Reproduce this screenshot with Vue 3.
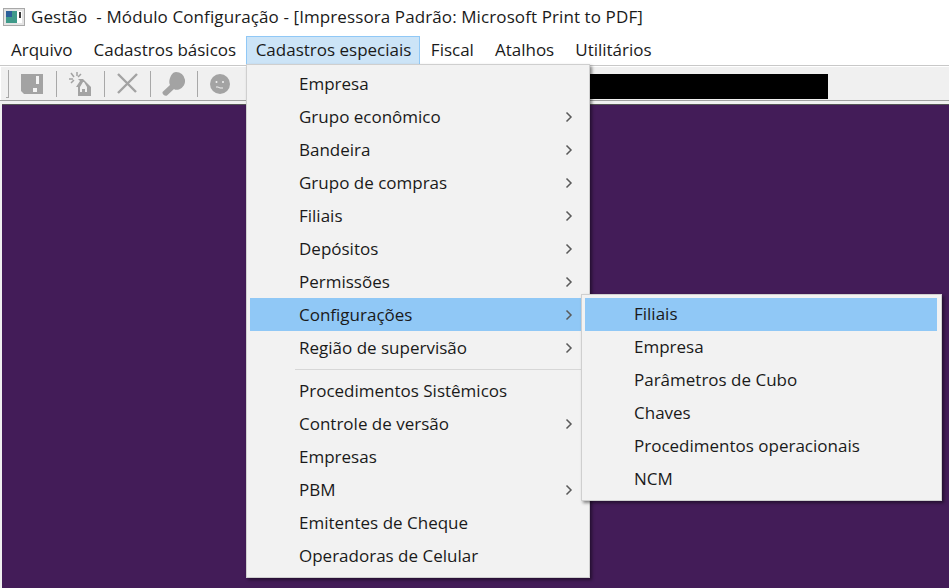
<script setup>
const top = ['Arquivo', 'Cadastros básicos', 'Cadastros especiais', 'Fiscal', 'Atalhos', 'Utilitários']
const groupA = [
  { t: 'Empresa' }, { t: 'Grupo econômico', s: 1 }, { t: 'Bandeira', s: 1 }, { t: 'Grupo de compras', s: 1 },
  { t: 'Filiais', s: 1 }, { t: 'Depósitos', s: 1 }, { t: 'Permissões', s: 1 }, { t: 'Configurações', s: 1, on: 1 },
  { t: 'Região de supervisão', s: 1 }
]
const groupB = [
  { t: 'Procedimentos Sistêmicos' }, { t: 'Controle de versão', s: 1 }, { t: 'Empresas' }, { t: 'PBM', s: 1 },
  { t: 'Emitentes de Cheque' }, { t: 'Operadoras de Celular' }
]
const sub = ['Filiais', 'Empresa', 'Parâmetros de Cubo', 'Chaves', 'Procedimentos operacionais', 'NCM']
</script>

<template>
  <div class="win">
    <header class="title">
      <svg class="appicon" width="22" height="18" viewBox="0 0 22 18">
        <rect x="0.500" y="0.500" width="21" height="17" fill="#e4e4e4" stroke="#a8a8a8" />
        <rect x="3" y="3" width="11" height="12" fill="#3f9a8a" />
        <rect x="3" y="3" width="6" height="6" fill="#2b5f9a" />
        <rect x="14" y="3" width="5" height="12" fill="#fff" />
        <rect x="16" y="4" width="2" height="6" fill="#3a3a3a" />
      </svg>
      <span>Gestão&nbsp; - Módulo Configuração - [Impressora Padrão: Microsoft Print to PDF]</span>
    </header>
    <nav class="menubar">
      <span v-for="(m, i) in top" :key="m" class="mi" :class="{ act: i === 2 }">{{ m }}</span>
    </nav>
    <div class="toolbar">
      <i class="grip"></i>
      <svg class="ic" width="23" height="22" viewBox="0 0 23 22"><path fill="#a3a3a3" d="M0 1h22v20H3l-3-3z" /><rect x="15" y="3" width="3" height="8" fill="#f4f4f4" /><rect x="12" y="15" width="4" height="4" fill="#f4f4f4" /></svg>
      <i class="sep"></i>
      <svg class="ic" width="23" height="24" viewBox="0 0 23 24"><path fill="#a3a3a3" d="M9 7h5l8 8v9H9v-9H7l4-6z" /><path fill="#f0f0f0" d="M11 15l3-5h1l3 5v5h-2v-3h-3v3h-2z" /><path stroke="#a3a3a3" stroke-width="1.500" fill="none" d="M2 1l3 4M8 0v4M0 7l4 0M2 11l3-3M12 2l-3 3" /></svg>
      <i class="sep"></i>
      <svg class="ic x" width="21" height="21" viewBox="0 0 21 21"><path stroke="#a3a3a3" stroke-width="2.400" fill="none" d="M1 1l18 18M20 1L1 20" /></svg>
      <i class="sep"></i>
      <svg class="ic key" width="24" height="24" viewBox="0 0 24 24"><path fill="#a3a3a3" d="M15 0a9 9 0 0 1 3 17.500c-2 .5-4 .5-5-.5l-7 6.500c-2 1-5-1-4.500-3.500L9 13c-1-2-1-4 0-7 1-3 3-6 6-6z" /></svg>
      <i class="sep"></i>
      <svg class="ic" width="20" height="20" viewBox="0 0 20 20"><circle cx="10" cy="10" r="10" fill="#a3a3a3" /><circle cx="6.500" cy="8" r="1" fill="#f0f0f0" /><circle cx="13" cy="8" r="1" fill="#f0f0f0" /><path stroke="#f0f0f0" fill="none" d="M6 13h2l2 1h3" /></svg>
    </div>
    <div class="redact"></div>
    <main class="desk"></main>

    <div class="menu main">
      <div v-for="r in groupA" :key="r.t" class="row" :class="{ on: r.on }">
        <span>{{ r.t }}</span>
        <svg v-if="r.s" width="8" height="12" viewBox="0 0 8 12"><path d="M1.500 1.500L6 6l-4.500 4.500" fill="none" stroke="#5a5a5a" stroke-width="1.500" /></svg>
      </div>
      <div class="rule"></div>
      <div v-for="r in groupB" :key="r.t" class="row">
        <span>{{ r.t }}</span>
        <svg v-if="r.s" width="8" height="12" viewBox="0 0 8 12"><path d="M1.500 1.500L6 6l-4.500 4.500" fill="none" stroke="#5a5a5a" stroke-width="1.500" /></svg>
      </div>
    </div>

    <div class="menu subm">
      <div v-for="(s, i) in sub" :key="s" class="row" :class="{ on: i === 0 }"><span>{{ s }}</span></div>
    </div>
  </div>
</template>

<style scoped>
.win {
  position: relative;
  width: 949px;
  height: 588px;
  overflow: hidden;
  display: flex;
  flex-direction: column;
  background: #fff;
  font-family: "Open Sans", "Noto Sans", sans-serif;
  font-size: 17px;
  color: #1a1a1a;
}
.title {
  height: 36px;
  flex: none;
  display: flex;
  align-items: center;
  gap: 6px;
  padding: 0 0 3px 3px;
  box-sizing: border-box;
  letter-spacing: 0.1px;
}
.menubar {
  height: 29px;
  flex: none;
  display: flex;
  padding-left: 0.500px;
  border-bottom: 1px solid #c8c8c8;
}
.mi {
  padding: 0 10.500px;
  line-height: 27px;
  box-sizing: border-box;
  height: 28px;
  white-space: nowrap;
}
.mi.act {
  background: #cce4f7;
  border: 1px solid #90c8f6;
  border-bottom: 0;
  margin-left: -1px;
  padding: 0 8px 0 9px;
  line-height: 26px;
}
.toolbar {
  height: 35px;
  flex: none;
  box-sizing: border-box;
  background: #f0f0f0;
  border-top: 1px solid #fff;
  border-bottom: 1px solid #a0a0a0;
  box-shadow: inset 1px 0 #fff;
  display: flex;
  align-items: center;
  padding-left: 6px;
  gap: 12px;
}
.grip {
  width: 2px;
  height: 27px;
  border-right: 1px solid #a8a8a8;
  border-bottom: 1px solid #a8a8a8;
}
.sep {
  width: 1px;
  height: 26px;
  background: #a8a8a8;
}
.key {
  margin-left: -2px;
}
.redact {
  position: absolute;
  left: 589px;
  top: 74px;
  width: 239px;
  height: 25px;
  background: #000;
}
.desk {
  flex: 1;
  background: #431c58;
  border-top: 3px solid #f0f0f0;
  border-left: 2px solid #f0f0f0;
  box-shadow: inset 0 1px #555;
}
.menu {
  position: absolute;
  box-sizing: border-box;
  background: #f2f2f2;
  border: 1px solid #cfcfcf;
  padding: 3px;
  box-shadow: 2px 2px 3px rgba(0, 0, 0, 0.45);
}
.main {
  left: 246px;
  top: 64px;
  width: 344px;
  height: 514px;
  padding-top: 2px;
}
.subm {
  left: 581px;
  top: 294px;
  width: 361px;
  height: 207px;
  padding-right: 4px;
}
.row {
  height: 33px;
  display: flex;
  align-items: center;
  justify-content: space-between;
  padding: 0 13px 1px 49px;
  box-sizing: border-box;
  white-space: nowrap;
}
.row svg {
  margin-top: 1px;
}
.subm .row {
  padding-bottom: 2px;
}
.row.on {
  background: #90c8f6;
}
.rule {
  height: 1px;
  margin: 5px 3px 4px 45px;
  background: #d7d7d7;
}
</style>

<style>
html, body { margin: 0; background: #fff; }
</style>
